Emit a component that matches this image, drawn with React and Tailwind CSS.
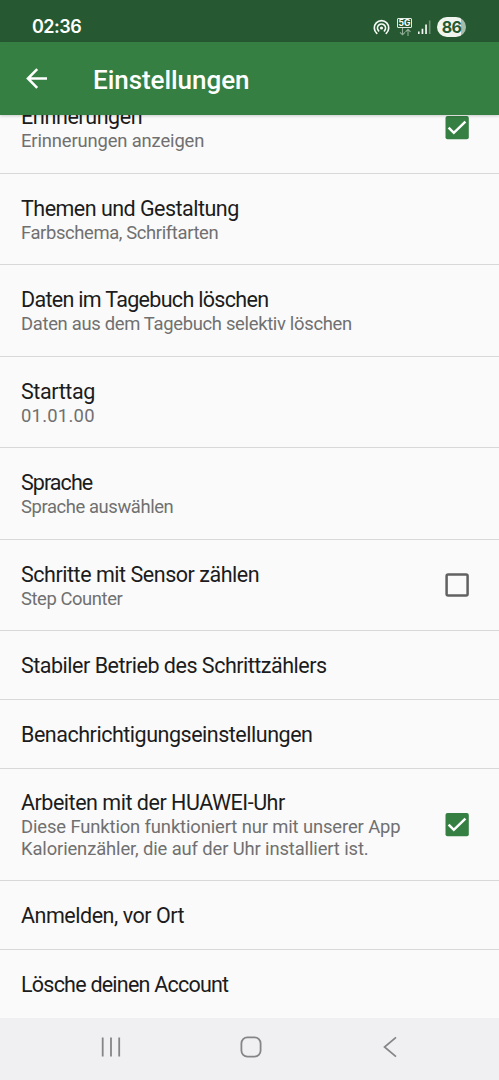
import React from "react";

const settings = [
  { title: "Erinnerungen", titleClass: "tracking-[-0.42px]", summary: "Erinnerungen anzeigen", summaryClass: "tracking-[-0.14px]", checked: true, height: "h-[92px]" },
  { title: "Themen und Gestaltung", titleClass: "tracking-[-0.52px]", summary: "Farbschema, Schriftarten", summaryClass: "tracking-[-0.37px]", height: "h-[91px]" },
  { title: "Daten im Tagebuch löschen", titleClass: "tracking-[-0.69px]", summary: "Daten aus dem Tagebuch selektiv löschen", summaryClass: "tracking-[-0.31px]", height: "h-[92px]" },
  { title: "Starttag", titleClass: "tracking-[-0.4px]", summary: "01.01.00", summaryClass: "tracking-[0.25px]", height: "h-[91px]" },
  { title: "Sprache", titleClass: "tracking-[-0.95px]", summary: "Sprache auswählen", summaryClass: "tracking-[-0.4px]", height: "h-[92px]" },
  { title: "Schritte mit Sensor zählen", titleClass: "tracking-[-0.47px]", summary: "Step Counter", summaryClass: "tracking-[-0.42px]", checked: false, height: "h-[91px]" },
  { title: "Stabiler Betrieb des Schrittzählers", titleClass: "tracking-[-0.49px]", height: "h-[69px]" },
  { title: "Benachrichtigungseinstellungen", titleClass: "tracking-[-0.48px]", height: "h-[69px]" },
  { title: "Arbeiten mit der HUAWEI-Uhr", titleClass: "tracking-[-0.48px]", summary: "Diese Funktion funktioniert nur mit unserer App\nKalorienzähler, die auf der Uhr installiert ist.", summaryClass: "tracking-[-0.12px]", checked: true, height: "h-[112px]" },
  { title: "Anmelden, vor Ort", titleClass: "tracking-[-0.47px]", height: "h-[69px]" },
  { title: "Lösche deinen Account", titleClass: "tracking-[-0.77px]", height: "h-[68px]" },
];

const Checkbox = ({ checked }) => (
  <svg className="w-6 h-6 shrink-0" viewBox="0 0 24 24" fill="none">
    {checked ? (
      <>
        <rect x="0.5" y="0" width="23.3" height="23.3" rx="2" fill="#357f43" />
        <path d="M3.6 11.6l5.2 5.2L20.4 5.6" stroke="#fff" strokeWidth="2.5" />
      </>
    ) : (
      <rect x="1.6" y="1.4" width="21" height="21" rx="1.5" stroke="#616161" strokeWidth="2.5" />
    )}
  </svg>
);

const StatusBar = () => (
  <div className="h-[42px] shrink-0 bg-[#265931] flex items-center justify-between pl-8 pr-[33px] pt-3 text-white">
    <span className="font-['Inter'] text-[18px] leading-none font-semibold tracking-[-0.5px]">02:36</span>
    <div className="flex items-center">
      <svg className="w-[17px] h-[17px]" viewBox="0 0 17 17" fill="none" stroke="#f4f8f4" strokeWidth="1.7" strokeLinecap="round">
        <path d="M3.8 14.3a7.2 7.2 0 1 1 9.4 0" />
        <path d="M5.6 11.8a4 4 0 1 1 5.8 0" />
        <circle cx="8.5" cy="9" r="1.6" fill="#f4f8f4" stroke="none" />
      </svg>
      <div className="ml-[7px] w-[15px] flex flex-col items-center">
        <span className="w-[15px] h-[10px] border border-[#e3ece4] rounded-[1px] flex items-center justify-center font-['Inter'] text-[8.5px] leading-none font-bold">5G</span>
        <svg className="w-[12px] h-[8px]" viewBox="0 0 12 8" fill="none" stroke="#91ad96" strokeWidth="1.1">
          <path d="M3.5 0v6.5M1 4.3l2.5 2.5L6 4.3M9 8V1.5M6.5 3.8L9 1.3l2.5 2.5" />
        </svg>
      </div>
      <svg className="ml-[6px] w-[13px] h-[14px]" viewBox="0 0 13 14">
        <path d="M0 11.5h1.6V14H0zM3.6 8.8h1.7V14H3.6zM7.2 4.5h1.7V14H7.2z" fill="#f4f8f4" />
        <path d="M10.9 0.5h1.6V14h-1.6z" fill="#6d9073" />
      </svg>
      <span className="ml-[6px] w-[29px] h-5 rounded-full bg-linear-to-r from-[#f0f5ef] from-83% to-[#a6bda9] to-83% text-[#265931] flex items-center justify-center font-['Inter'] text-[16px] leading-none font-bold tracking-[-0.7px]">86</span>
    </div>
  </div>
);

const Toolbar = () => (
  <div className="h-[73px] shrink-0 bg-[#357f43] flex items-center pl-[26px] shadow-[0_1px_3px_rgba(0,0,0,0.2)] relative text-white">
    <svg className="w-[21px] h-[21px]" viewBox="0 0 21 21" fill="none" stroke="currentColor" strokeWidth="2.5">
      <path d="M21 10.5H2M11.2 1.2l-9.3 9.3 9.3 9.3" />
    </svg>
    <h1 className="ml-[46px] pt-[2px] text-[26px] leading-8 font-medium tracking-[-0.05px]">Einstellungen</h1>
  </div>
);

const SettingRow = ({ title, titleClass, summary, summaryClass, checked, height }) => (
  <div className={`${height} shrink-0 flex items-center justify-between pl-[21px] pr-[30px] border-b border-[#d8d8d8] last:border-b-0`}>
    <div className="whitespace-nowrap">
      <div className={`text-[21.5px] leading-[27px] text-[#1c1c1c] ${titleClass}`}>{title}</div>
      {summary && <div className={`text-[18.4px] leading-[21.7px] text-[#707070] whitespace-pre ${summaryClass}`}>{summary}</div>}
    </div>
    {checked !== undefined && <Checkbox checked={checked} />}
  </div>
);

const NavigationBar = () => (
  <div className="h-[62px] shrink-0 bg-[#f0f0f3] flex items-center justify-between pl-[101px] pr-[102px] pb-1 text-[#858588]">
    <svg className="w-5 h-5" viewBox="0 0 20 20" stroke="currentColor" strokeWidth="1.8">
      <path d="M1.7 0.5v19M10 0.5v19M18.2 0.5v19" />
    </svg>
    <svg className="w-[22px] h-[22px] mr-[3px]" viewBox="0 0 22 22" fill="none" stroke="currentColor" strokeWidth="1.8">
      <rect x="1.4" y="1.4" width="19.2" height="19.2" rx="6" />
    </svg>
    <svg className="w-[14px] h-[22px]" viewBox="0 0 14 22" fill="none" stroke="currentColor" strokeWidth="1.7">
      <path d="M13 1.3L1.5 11 13 20.7" />
    </svg>
  </div>
);

const App = () => (
  <div className="w-[499px] h-[1080px] flex flex-col overflow-hidden bg-[#fafafa] font-['Roboto',sans-serif]">
    <StatusBar />
    <Toolbar />
    <div className="flex-1 min-h-0 overflow-hidden flex flex-col justify-end">
      {settings.map(item => (
        <SettingRow key={item.title} {...item} />
      ))}
    </div>
    <NavigationBar />
  </div>
);

export default App;
